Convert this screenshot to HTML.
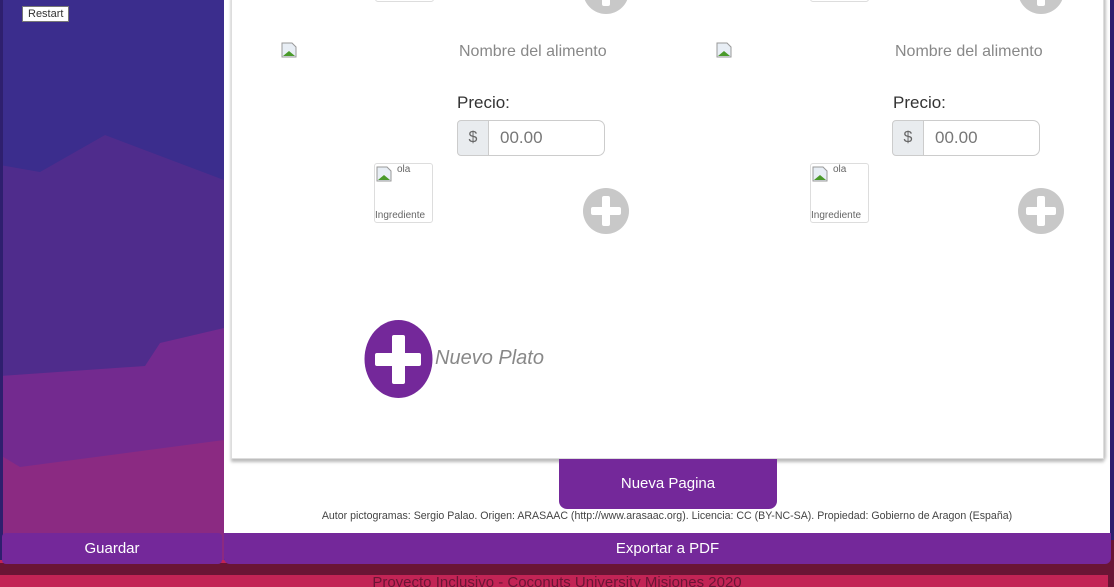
<!DOCTYPE html>
<html><head><meta charset="utf-8"><style>
*{margin:0;padding:0;box-sizing:border-box}
html,body{width:1114px;height:587px;overflow:hidden}
body{position:relative;font-family:"Liberation Sans",sans-serif;background:#c22455}
.abs{position:absolute}
.white{left:224px;top:0;width:886px;height:533px;background:#fff}
.card{left:231px;top:-5px;width:873px;height:464px;background:#fff;border:1px solid #ddd;border-top:none;box-shadow:0 3px 3px #bbb,2px 0 3px #ccc}
.t{color:#888;font-size:16px}
.lbl{color:#333;font-size:17px}
.grp{height:36px;display:flex}
.grp .d{width:32px;background:#e9ecef;border:1px solid #ccc;border-radius:4px 0 0 4px;color:#666;font-size:16px;text-align:center;line-height:34px}
.grp .i{width:116px;border:1px solid #ccc;border-left:none;border-radius:0 7px 7px 0;color:#777;font-size:17px;line-height:34px;padding-left:11px}
.ing{width:59px;height:60px;border:1px solid #ddd;border-radius:3px;font-size:10px;color:#666}
.broken{width:16px;height:16px}
.btn{background:#74289a;color:#fff;font-size:15px;text-align:center}
</style></head><body>
<svg class="abs" style="left:0;top:0" width="1114" height="587">
<rect width="1114" height="587" fill="#3b2d8d"/>
<polygon points="0,165 40,172 105,135 224,180 224,587 0,587" fill="#4f2c8c"/>
<polygon points="0,376 145,366 160,343 224,328 224,587 0,587" fill="#732a8f"/>
<polygon points="0,455 20,467 224,440 224,587 0,587" fill="#8b2a82"/>
<rect x="0" y="0" width="3" height="587" fill="#2e1f6e"/>
<rect x="0" y="560" width="1114" height="27" fill="#c22455"/>
<rect x="0" y="563" width="1114" height="12" fill="#6a1535"/>
<rect x="1108" y="0" width="6" height="587" fill="#6a1535"/>
<rect x="1110" y="0" width="4" height="540" fill="#2e1f6e"/>
</svg>
<div class="abs white"></div>
<div class="abs card"></div>
<div class="abs ing" style="left:375px;top:-58px"></div>
<div class="abs ing" style="left:810px;top:-58px"></div>
<svg class="abs" style="left:583px;top:-32px" width="46" height="46"><circle cx="23" cy="23" r="23" fill="#c8c8c8"/><rect x="19" y="8" width="8" height="30" rx="2" fill="#fff"/><rect x="8" y="19" width="30" height="8" rx="2" fill="#fff"/></svg>
<svg class="abs" style="left:1018px;top:-32px" width="46" height="46"><circle cx="23" cy="23" r="23" fill="#c8c8c8"/><rect x="19" y="8" width="8" height="30" rx="2" fill="#fff"/><rect x="8" y="19" width="30" height="8" rx="2" fill="#fff"/></svg>

<svg class="abs broken" style="left:281px;top:42px" viewBox="0 0 16 16"><path d="M1 1h10l4 4v10H1z" fill="#e8eef5" stroke="#999"/><path d="M2 14l6-5 6 5z" fill="#4a9a2a"/></svg>
<div class="abs t" style="left:459px;top:43px">Nombre del alimento</div>
<div class="abs lbl" style="left:457px;top:93px">Precio:</div>
<div class="abs grp" style="left:457px;top:120px"><div class="d">$</div><div class="i">00.00</div></div>
<div class="abs ing" style="left:374px;top:163px"><div style="position:absolute;left:22px;top:0">ola</div><div style="position:absolute;left:0;top:46px">Ingrediente</div><svg class="broken" style="position:absolute;left:1px;top:2px" viewBox="0 0 16 16"><path d="M1 1h10l4 4v10H1z" fill="#e8eef5" stroke="#999"/><path d="M2 14l6-5 6 5z" fill="#4a9a2a"/></svg></div>
<svg class="abs" style="left:583px;top:188px" width="46" height="46"><circle cx="23" cy="23" r="23" fill="#c8c8c8"/><rect x="19" y="8" width="8" height="30" rx="2" fill="#fff"/><rect x="8" y="19" width="30" height="8" rx="2" fill="#fff"/></svg>

<svg class="abs broken" style="left:716px;top:42px" viewBox="0 0 16 16"><path d="M1 1h10l4 4v10H1z" fill="#e8eef5" stroke="#999"/><path d="M2 14l6-5 6 5z" fill="#4a9a2a"/></svg>
<div class="abs t" style="left:895px;top:43px">Nombre del alimento</div>
<div class="abs lbl" style="left:893px;top:93px">Precio:</div>
<div class="abs grp" style="left:892px;top:120px"><div class="d">$</div><div class="i">00.00</div></div>
<div class="abs ing" style="left:810px;top:163px"><div style="position:absolute;left:22px;top:0">ola</div><div style="position:absolute;left:0;top:46px">Ingrediente</div><svg class="broken" style="position:absolute;left:1px;top:2px" viewBox="0 0 16 16"><path d="M1 1h10l4 4v10H1z" fill="#e8eef5" stroke="#999"/><path d="M2 14l6-5 6 5z" fill="#4a9a2a"/></svg></div>
<svg class="abs" style="left:1018px;top:188px" width="46" height="46"><circle cx="23" cy="23" r="23" fill="#c8c8c8"/><rect x="19" y="8" width="8" height="30" rx="2" fill="#fff"/><rect x="8" y="19" width="30" height="8" rx="2" fill="#fff"/></svg>

<svg class="abs" style="left:364px;top:320px" width="70" height="78"><ellipse cx="34.5" cy="39" rx="34" ry="39" fill="#74289a"/><rect x="28" y="15" width="13" height="49" rx="2" fill="#fff"/><rect x="11" y="33" width="46" height="13" rx="2" fill="#fff"/></svg>
<div class="abs" style="left:435px;top:347px;color:#888;font-size:20px;font-style:italic">Nuevo Plato</div>

<div class="abs btn" style="left:559px;top:459px;width:218px;height:50px;line-height:50px;border-radius:0 0 8px 8px">Nueva Pagina</div>
<div class="abs" style="left:224px;top:510px;width:886px;text-align:center;font-size:10.6px;color:#444">Autor pictogramas: Sergio Palao. Origen: ARASAAC (http://www.arasaac.org). Licencia: CC (BY-NC-SA). Propiedad: Gobierno de Aragon (España)</div>

<div class="abs btn" style="left:2px;top:533px;width:220px;height:31px;line-height:31px;border-radius:4px">Guardar</div>
<div class="abs btn" style="left:224px;top:533px;width:887px;height:31px;line-height:31px;border-radius:0 0 6px 6px">Exportar a PDF</div>
<div class="abs" style="left:0;top:574px;width:1114px;text-align:center;font-size:15px;color:#6a1535">Proyecto Inclusivo - Coconuts University Misiones 2020</div>

<div class="abs" style="left:22px;top:6px;background:#fff;border:1px solid #777;font-size:11px;padding:1px 5px;color:#333">Restart</div>
</body></html>
